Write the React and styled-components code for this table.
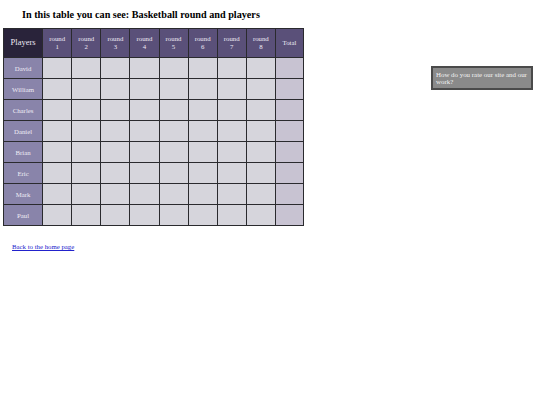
import React from "react";
import styled, { createGlobalStyle } from "styled-components";

const Global = createGlobalStyle`
  html, body { margin: 0; padding: 0; background: #ffffff; }
  body { font-family: "Liberation Serif", "Times New Roman", serif; }
`;

const Page = styled.div`
  display: flex;
  justify-content: space-between;
  align-items: flex-start;
  width: 540px;
  height: 405px;
  box-sizing: border-box;
  padding: 0 7px 0 3px;
`;

const Main = styled.div`
  display: flex;
  flex-direction: column;
`;

const Heading = styled.h1`
  margin: 9px 0 0 19px;
  font-size: 10.2px;
  line-height: 12px;
  font-weight: bold;
  color: #000;
`;

const Table = styled.table`
  margin-top: 7px;
  width: 301px;
  border-collapse: collapse;
  border: 1.5px solid #555;
  table-layout: fixed;
`;

const Col = styled.col`
  width: ${(p) => p.$w}px;
`;

const HeadCell = styled.th`
  height: 28px;
  padding: 0;
  background: ${(p) => (p.$dark ? "#29233a" : "#5a5079")};
  color: #eeeaf5;
  font-weight: normal;
  font-size: ${(p) => p.$size}px;
  line-height: ${(p) => p.$size + 1}px;
  border: 1px solid #2a2a2e;
  text-align: center;
  overflow: hidden;
`;

const NameCell = styled.td`
  height: 20px;
  padding: 0;
  background: #8984aa;
  color: #eeecf5;
  font-size: 6.8px;
  text-align: center;
  border: 1px solid #2a2a2e;
`;

const DataCell = styled.td`
  height: 20px;
  padding: 0;
  background: ${(p) => (p.$total ? "#c8c3d2" : "#d6d5dc")};
  border: 1px solid #2a2a2e;
`;

const BackLink = styled.a`
  margin: 17px 0 0 9px;
  font-size: 6.8px;
  color: #2222cc;
  text-decoration: underline;
`;

const Feedback = styled.aside`
  margin-top: 66px;
  width: 102px;
  height: 24px;
  box-sizing: border-box;
  background: #8a8a8a;
  border: 2px solid #4a4a4a;
  color: #f2f2f2;
  font-size: 6.9px;
  line-height: 7px;
  padding: 3px 3px;
`;

const players = ["David", "William", "Charles", "Daniel", "Brian", "Eric", "Mark", "Paul"];
const rounds = [1, 2, 3, 4, 5, 6, 7, 8];

export default function App() {
  return (
    <>
      <Global />
      <Page>
        <Main>
          <Heading>In this table you can see: Basketball round and players</Heading>
          <Table>
            <colgroup>
              <Col $w={39} />
              {rounds.map((r) => (
                <Col key={r} $w={29} />
              ))}
              <Col $w={28} />
            </colgroup>
            <thead>
              <tr>
                <HeadCell $dark $size={8.5}>Players</HeadCell>
                {rounds.map((r) => (
                  <HeadCell key={r} $size={6.8}>
                    round<br />{r}
                  </HeadCell>
                ))}
                <HeadCell $size={6.8}>Total</HeadCell>
              </tr>
            </thead>
            <tbody>
              {players.map((p) => (
                <tr key={p}>
                  <NameCell>{p}</NameCell>
                  {rounds.map((r) => (
                    <DataCell key={r} />
                  ))}
                  <DataCell $total />
                </tr>
              ))}
            </tbody>
          </Table>
          <BackLink href="#">Back to the home page</BackLink>
        </Main>
        <Feedback>How do you rate our site and our work?</Feedback>
      </Page>
    </>
  );
}
